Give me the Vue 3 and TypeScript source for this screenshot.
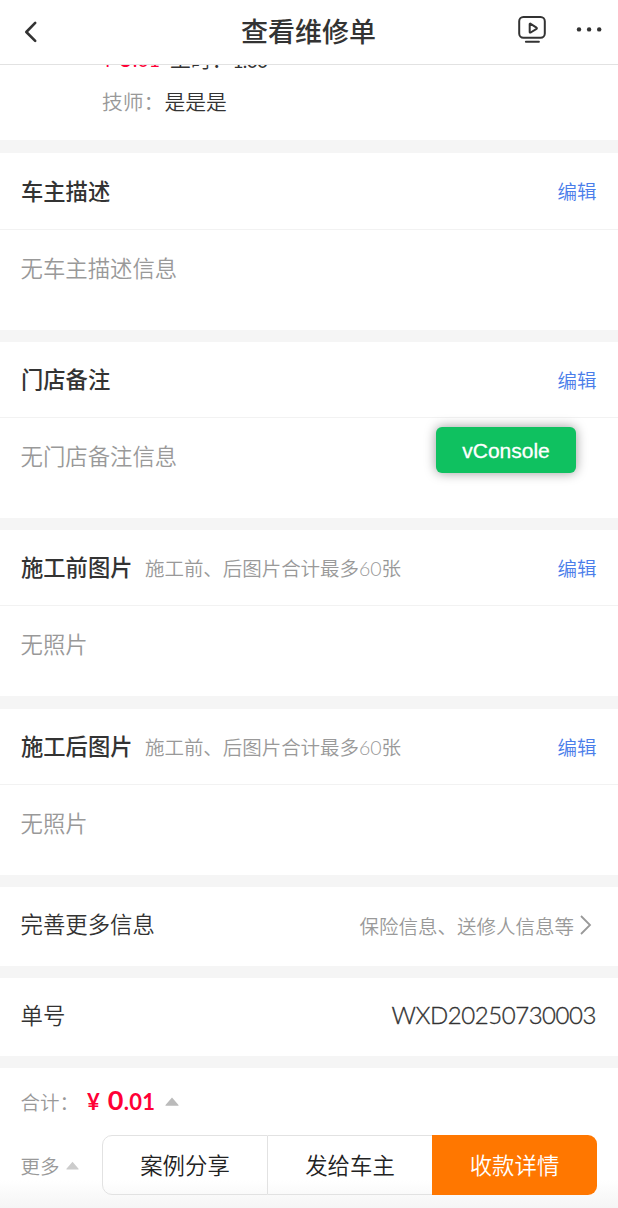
<script setup lang="ts">
interface Section {
  title: string
  hint?: string
  body: string
  size: string
}

const sections: Section[] = [
  { title: '车主描述', body: '无车主描述信息', size: 'owner' },
  { title: '门店备注', body: '无门店备注信息', size: 'shop' },
  { title: '施工前图片', hint: '施工前、后图片合计最多60张', body: '无照片', size: 'before' },
  { title: '施工后图片', hint: '施工前、后图片合计最多60张', body: '无照片', size: 'after' },
]
</script>

<template>
  <div class="page">
    <header class="nav">
      <svg class="back" width="16" height="24" viewBox="0 0 16 24">
        <path d="M13.2 2.9 4.3 12l8.9 8.9" />
      </svg>
      <h1>查看维修单</h1>
      <div class="tools">
        <svg class="tv" width="30" height="30" viewBox="0 0 30 30">
          <rect x="2.2" y="2.1" width="25.6" height="20.7" rx="4.2" />
          <path d="M12.7 9.1v7.8c0 .6.5.8 1 .6l5.8-3.6c.5-.4.5-1 0-1.3l-5.8-3.8c-.5-.4-1-.2-1 .3Z" />
          <path d="M8.9 26.8h13" />
        </svg>
        <svg class="dots" width="28" height="6" viewBox="0 0 28 6">
          <circle cx="4" cy="3.4" r="2.2" />
          <circle cx="14.1" cy="3.4" r="2.2" />
          <circle cx="24.2" cy="3.4" r="2.2" />
        </svg>
      </div>
    </header>

    <main>
      <section class="item">
        <div class="price-row">
          <span class="price">¥ <b>0</b>.01</span>
          <span class="hours">工时：<span class="num">1.00</span></span>
        </div>
        <div class="tech"><span class="label">技师：</span>是是是</div>
      </section>

      <section v-for="s in sections" :key="s.title" class="card" :class="s.size">
        <div class="head">
          <h2>{{ s.title }}</h2>
          <span v-if="s.hint" class="hint">{{ s.hint }}</span>
          <a class="edit">编辑</a>
        </div>
        <p>{{ s.body }}</p>
      </section>

      <section class="row more-info">
        <span>完善更多信息</span>
        <span class="aside">
          保险信息、送修人信息等
          <svg width="12" height="20" viewBox="0 0 12 20"><path d="m1 1 9 9-9 9" /></svg>
        </span>
      </section>
      <section class="row order">
        <span>单号</span>
        <span class="order-no">WXD20250730003</span>
      </section>
    </main>

    <footer>
      <div class="total">
        <span class="total-label">合计：</span>
        <span class="price sum">¥ <b>0</b>.01</span>
        <svg class="tri" width="14" height="9" viewBox="0 0 14 9"><path d="M7 .5 13.5 8a.5.5 0 0 1-.4.8H.9A.5.5 0 0 1 .5 8Z" /></svg>
      </div>
      <div class="actions">
        <span class="more">更多
          <svg class="tri pale" width="13" height="9" viewBox="0 0 14 9"><path d="M7 .5 13.5 8a.5.5 0 0 1-.4.8H.9A.5.5 0 0 1 .5 8Z" /></svg>
        </span>
        <div class="group">
          <button>案例分享</button>
          <button>发给车主</button>
          <button class="primary">收款详情</button>
        </div>
      </div>
    </footer>

    <div class="vconsole">vConsole</div>
  </div>
</template>

<style>
body {
  margin: 0;
}
</style>

<style scoped>
* {
  box-sizing: border-box;
}
.page {
  position: relative;
  display: flex;
  flex-direction: column;
  width: 618px;
  height: 1208px;
  overflow: hidden;
  background: #f5f5f5;
  color: #333;
  font-family: Lato, "Noto Sans CJK SC", sans-serif;
  font-weight: 350;
}
.nav {
  display: grid;
  grid-template-columns: 1fr auto 1fr;
  align-items: center;
  height: 65px;
  flex: none;
  padding: 0 15px 1px 22px;
  background: #fff;
  border-bottom: 1px solid #e2e2e2;
}
h1 {
  margin: 1px 0 0 -8px;
  font-size: 27px;
  line-height: 40px;
  font-weight: 500;
}
svg {
  display: block;
  fill: none;
  flex: none;
}
.back {
  stroke: #333;
  stroke-width: 2.6;
  stroke-linecap: round;
  stroke-linejoin: round;
}
.tools {
  display: flex;
  align-items: center;
  justify-content: flex-end;
  gap: 28px;
  padding-bottom: 5px;
}
.tv {
  stroke: #333;
  stroke-width: 2;
  stroke-linecap: round;
  stroke-linejoin: round;
  margin-top: 2px;
}
.dots {
  fill: #333;
}
main {
  flex: none;
}
section {
  background: #fff;
}
.item {
  height: 75px;
  padding-left: 102px;
  overflow: hidden;
  font-size: 20.8px;
}
.price-row {
  display: flex;
  align-items: center;
  height: 30px;
  transform: translateY(-21px);
}
.price {
  color: #ff0036;
  font-weight: 400;
  white-space: pre;
}
.price b {
  font-weight: 700;
}
.item .price {
  width: 68px;
  font-size: 19.5px;
  padding-bottom: 4px;
}
.item .price b {
  font-size: 25px;
}
.num {
  font-size: 19px;
  font-weight: 400;
  letter-spacing: -0.6px;
}
.tech {
  line-height: 30px;
  margin-top: -8px;
}
.label,
.hint,
.aside,
.total-label,
.more {
  color: #999;
}
.card {
  display: flex;
  flex-direction: column;
}
.head {
  display: flex;
  align-items: center;
  padding: 0 21.5px 1px 21px;
  height: 76px;
  border-bottom: 1px solid #f2f2f2;
  flex: none;
}
h2 {
  margin: 2px 0 0;
  font-size: 22.3px;
  line-height: 34px;
  font-weight: 500;
}
.hint {
  margin-left: 12.5px;
  font-size: 19.5px;
  letter-spacing: -0.05px;
}
.edit {
  margin-left: auto;
  font-size: 19.5px;
  color: #4a7dea;
}
p {
  margin: 22px 0 0 20.5px;
  font-size: 22.4px;
  line-height: 34px;
  color: #999;
}
.owner {
  height: 177px;
  margin-top: 13px;
}
.owner .head {
  height: 77px;
}
.shop {
  height: 176px;
  margin-top: 12px;
}
.before {
  height: 166px;
  margin-top: 12px;
}
.after {
  height: 166px;
  margin-top: 13px;
}
.row {
  display: flex;
  align-items: center;
  justify-content: space-between;
  margin-top: 12px;
  padding: 0 22px 0 20.5px;
  font-size: 22.4px;
}
.more-info {
  height: 79px;
  padding-right: 26px;
  padding-bottom: 7px;
}
.aside {
  display: flex;
  align-items: center;
  gap: 6px;
  margin-top: 4px;
  font-size: 19.5px;
}
.aside svg {
  stroke: #999;
  stroke-width: 1.8;
  margin-top: -1px;
}
.order {
  height: 78px;
  padding-bottom: 6px;
}
.order-no {
  font-size: 24px;
  font-weight: 300;
  letter-spacing: -0.45px;
  -webkit-text-stroke: 0.35px #333;
  margin-top: 1px;
}
footer {
  flex: 1;
  margin-top: 12px;
  padding: 0 21px 0 20.5px;
  background: linear-gradient(#fff 80%, #f5f5f5);
}
.total {
  display: flex;
  align-items: center;
  height: 67px;
  padding-bottom: 1px;
  font-size: 19.5px;
}
.sum {
  margin-left: 8px;
  padding-bottom: 3px;
  font-size: 22px;
  font-weight: 700;
  letter-spacing: 0.3px;
  word-spacing: 2px;
}
.sum b {
  font-size: 27px;
}
.tri {
  fill: #bbb;
  margin-left: 10px;
}
.pale {
  fill: #ccc;
  margin-left: 0;
}
.actions {
  display: flex;
  align-items: center;
  justify-content: space-between;
}
.more {
  display: flex;
  align-items: center;
  gap: 6px;
  font-size: 19.5px;
}
.group {
  display: grid;
  grid-template-columns: 166px 164px 165px;
  height: 60px;
}
button {
  font: inherit;
  font-size: 22.4px;
  color: #222;
  background: transparent;
  border: 1px solid #e2e2e2;
  padding: 0 0 2px;
}
button:first-child {
  border-radius: 10px 0 0 10px;
}
button:nth-child(2) {
  border-left: 0;
  border-right: 0;
}
button.primary {
  border: 0;
  border-radius: 0 9px 9px 0;
  background: #ff7700;
  color: #fff;
}
.vconsole {
  position: absolute;
  left: 436px;
  top: 427px;
  width: 140px;
  height: 46px;
  border-radius: 6px;
  background: #0fc160;
  box-shadow: 0 0 12px rgba(0, 0, 0, 0.4);
  color: #fff;
  font: 400 21px/47px "Liberation Sans", sans-serif;
  text-align: center;
  -webkit-text-stroke: 0.3px #fff;
}
</style>
